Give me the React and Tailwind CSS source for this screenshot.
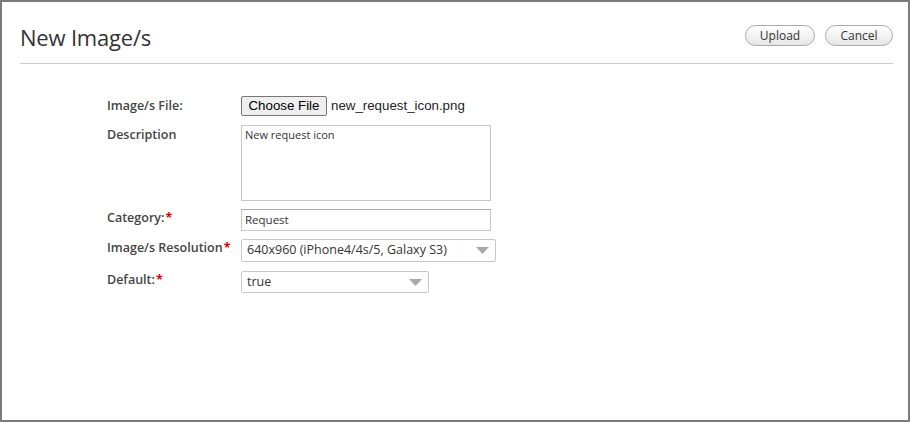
import React from "react";

const font = { fontFamily: "'Open Sans', 'Noto Sans', sans-serif" };

function Label({ children, req, className = "" }) {
  return (
    <div className={"w-[134px] shrink-0 text-[12.5px] font-semibold text-[#444] leading-[18px] " + className}>
      {children}
      {req && <span className="text-[#e00000] font-bold ml-[1px]">*</span>}
    </div>
  );
}

function Arrow() {
  return (
    <svg width="13" height="7" viewBox="0 0 13 7" className="shrink-0">
      <path d="M0 0 H13 L6.5 7 Z" fill="#a8a8a8" />
    </svg>
  );
}

export default function App() {
  return (
    <div
      className="w-[910px] h-[422px] box-border border-2 border-[#7b7b7b] bg-white pl-[18px] pr-[15px]"
      style={font}
    >
      <div className="flex justify-between items-start h-[62px] border-b border-[#cccccc]">
        <div className="mt-[21px] text-[22px] leading-[28px] text-[#333] tracking-[-0.2px]">
          New Image/s
        </div>
        <div className="flex gap-[10px] mt-[23px]">
          <button className="w-[70px] h-[21px] rounded-full border border-[#a8a8a8] bg-gradient-to-b from-white to-[#e6e6e6] text-[12px] text-[#333] leading-[19px]">
            Upload
          </button>
          <button className="w-[68px] h-[21px] rounded-full border border-[#a8a8a8] bg-gradient-to-b from-white to-[#e6e6e6] text-[12px] text-[#333] leading-[19px]">
            Cancel
          </button>
        </div>
      </div>

      <div className="pl-[87px] pt-[32px] flex flex-col">
        <div className="flex items-start h-[20px]">
          <Label className="pt-[1px]">Image/s File:</Label>
          <div className="flex items-center" style={{ fontFamily: "'Liberation Sans', Arial, sans-serif" }}>
            <div className="h-[20px] w-[86px] box-border border border-[#767676] rounded-[2px] bg-[#efefef] text-[13.3px] text-black flex items-center justify-center">
              Choose File
            </div>
            <span className="ml-[4px] text-[13.3px] text-[#222]">new_request_icon.png</span>
          </div>
        </div>

        <div className="flex items-start mt-[9px]">
          <Label className="pt-[1px]">Description</Label>
          <div className="w-[250px] h-[76px] box-border border border-[#c8c8c8] px-[3px] pt-[2px] text-[11px] text-[#333] leading-[14px]">
            New request icon
          </div>
        </div>

        <div className="flex items-start mt-[8px]">
          <Label req className="pt-[0px]">Category:</Label>
          <div className="w-[250px] h-[22px] box-border border border-[#c8c8c8] border-t-[#a8a8a8] px-[3px] text-[11.5px] text-[#333] flex items-center">
            Request
          </div>
        </div>

        <div className="flex items-start mt-[8px]">
          <Label req className="pt-[0px]">Image/s Resolution</Label>
          <div className="w-[255px] h-[23px] box-border border border-[#c8c8c8] rounded-[2px] pl-[5px] pr-[6px] text-[12.5px] text-[#333] flex items-center justify-between">
            <span>640x960 (iPhone4/4s/5, Galaxy S3)</span>
            <Arrow />
          </div>
        </div>

        <div className="flex items-start mt-[9px]">
          <Label req className="pt-[0px]">Default:</Label>
          <div className="w-[188px] h-[22px] box-border border border-[#c8c8c8] rounded-[2px] pl-[5px] pr-[6px] text-[12.5px] text-[#333] flex items-center justify-between">
            <span>true</span>
            <Arrow />
          </div>
        </div>
      </div>
    </div>
  );
}
